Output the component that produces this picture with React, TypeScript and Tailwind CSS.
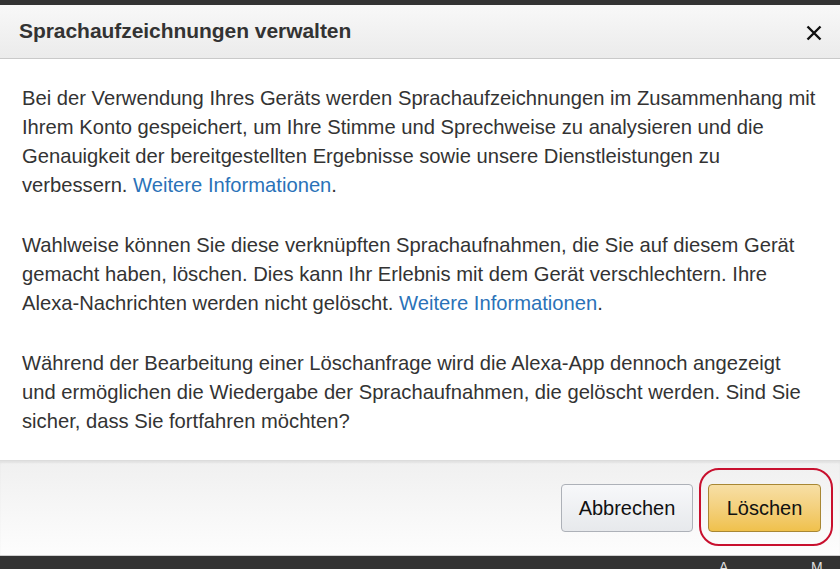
import React from "react";

const font = { fontFamily: '"Liberation Sans", Arial, sans-serif' };

export default function App() {
  return (
    <div className="w-[840px] h-[569px] bg-[#333333] flex flex-col overflow-hidden" style={font}>
      <div className="h-[5px] shrink-0" />
      <div className="flex flex-col bg-white">
        <div className="h-[54px] flex items-center justify-between pl-[19px] pr-[18px] bg-gradient-to-b from-[#f8f8f8] to-[#ebebeb] border-b border-[#c9c9c9]">
          <h1 className="text-[21px] font-bold text-[#333] tracking-[-0.05px] -mt-[2px]">Sprachaufzeichnungen verwalten</h1>
          <svg width="16" height="16" viewBox="0 0 16 16" className="mt-[2px]">
            <path d="M1.5 1.5 L14.5 14.5 M14.5 1.5 L1.5 14.5" stroke="#111" strokeWidth="2.4" strokeLinecap="butt" />
          </svg>
        </div>
        <div className="h-[401px] pl-[22px] pr-[4px] pt-[25px] text-[20.2px] leading-[29px] text-[#333] flex flex-col gap-[31px] whitespace-nowrap">
          <p>
            Bei der Verwendung Ihres Geräts werden Sprachaufzeichnungen im Zusammenhang mit<br />
            Ihrem Konto gespeichert, um Ihre Stimme und Sprechweise zu analysieren und die<br />
            Genauigkeit der bereitgestellten Ergebnisse sowie unsere Dienstleistungen zu<br />
            verbessern. <span className="text-[#2a72b8]">Weitere Informationen</span>.
          </p>
          <p>
            Wahlweise können Sie diese verknüpften Sprachaufnahmen, die Sie auf diesem Gerät<br />
            gemacht haben, löschen. Dies kann Ihr Erlebnis mit dem Gerät verschlechtern. Ihre<br />
            Alexa-Nachrichten werden nicht gelöscht. <span className="text-[#2a72b8]">Weitere Informationen</span>.
          </p>
          <p>
            Während der Bearbeitung einer Löschanfrage wird die Alexa-App dennoch angezeigt<br />
            und ermöglichen die Wiedergabe der Sprachaufnahmen, die gelöscht werden. Sind Sie<br />
            sicher, dass Sie fortfahren möchten?
          </p>
        </div>
        <div className="h-[96px] border-t border-[#dcdcdc] border-b border-b-[#d0d0d0] bg-gradient-to-b from-[#f0f0f0] to-[#fdfdfd] flex items-center justify-end pr-[19px] shadow-[inset_0_2px_2px_rgba(0,0,0,0.06)]">
          <button className="w-[132px] h-[48px] rounded-[4px] border border-[#adb1b8] bg-gradient-to-b from-[#f7f8fa] to-[#e7e9ec] text-[20px] text-[#111] mr-[15px]">
            Abbrechen
          </button>
          <div className="relative">
            <button className="w-[113px] h-[48px] rounded-[4px] border border-[#a88734] bg-gradient-to-b from-[#f7dfa5] to-[#f0c14b] text-[20px] text-[#111]">
              Löschen
            </button>
            <div className="absolute left-[-9px] top-[-16px] w-[134px] h-[78px] rounded-[20px] border-[2px] border-[#c8102e] pointer-events-none" />
          </div>
        </div>
      </div>
      <div className="flex-1 relative text-[#ddd] text-[14px] leading-[14px]">
        <span className="absolute left-[719px] top-[4px]">A</span>
        <span className="absolute left-[811px] top-[4px]">M</span>
      </div>
    </div>
  );
}
